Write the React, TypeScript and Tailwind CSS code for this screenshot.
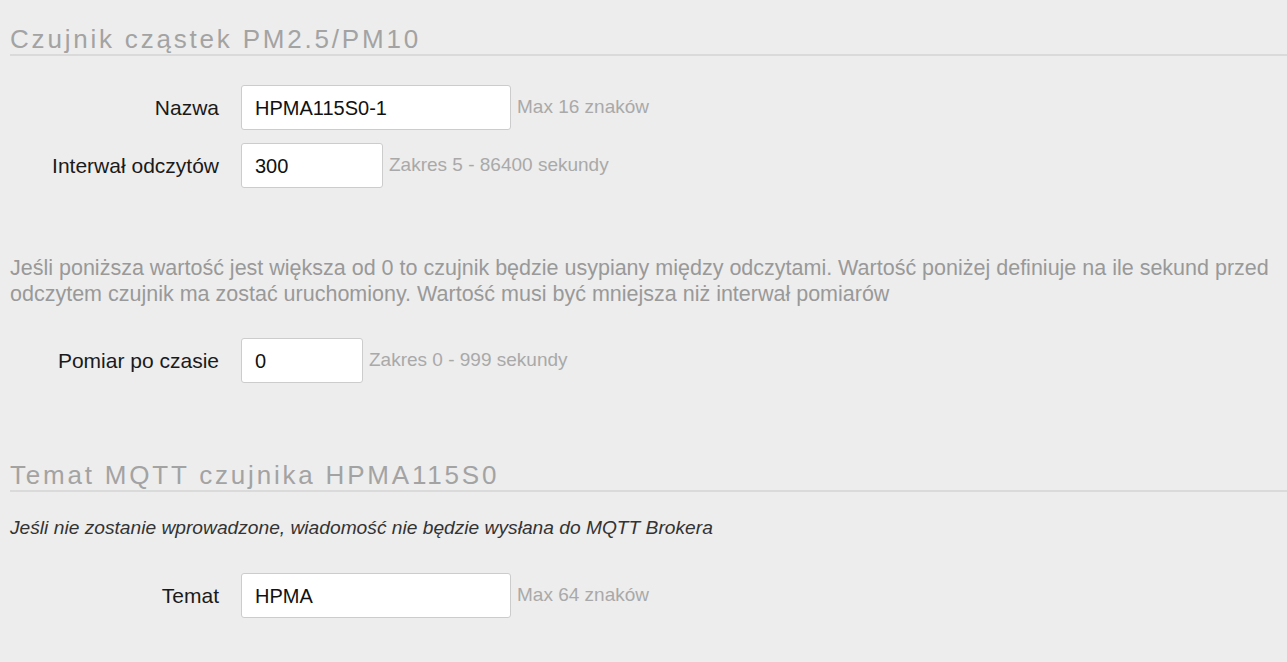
import React from "react";

function Row({ label, value, width, hint }: { label: string; value: string; width: string; hint: string }) {
  return (
    <div className="flex items-center">
      <div className="w-[209px] text-right text-[21px] text-[#1a1a1a] leading-[24px]">{label}</div>
      <div className={`ml-[22px] h-[45px] ${width} bg-white border border-[#cccccc] rounded-[3px] flex items-center pl-[13px] text-[20px] text-[#111]`}>
        {value}
      </div>
      <div className="ml-[6px] text-[19px] text-[#a9a9a9]">{hint}</div>
    </div>
  );
}

export default function App() {
  return (
    <div className="min-h-[662px] w-full bg-[#ededed] pl-[10px] pt-[24px] overflow-hidden font-['Liberation_Sans',Arial,sans-serif]">
      <h2 className="text-[26px] leading-[30px] tracking-[2.8px] text-[#a3a3a3] border-b-2 border-[#dadada]">
        Czujnik cząstek PM2.5/PM10
      </h2>
      <div className="mt-[29px] flex flex-col gap-[13px]">
        <Row label="Nazwa" value="HPMA115S0-1" width="w-[270px]" hint="Max 16 znaków" />
        <Row label="Interwał odczytów" value="300" width="w-[142px]" hint="Zakres 5 - 86400 sekundy" />
      </div>
      <p className="mt-[67px] text-[21.5px] leading-[26px] text-[#999999] pr-[10px]">
        Jeśli poniższa wartość jest większa od 0 to czujnik będzie usypiany między odczytami. Wartość poniżej definiuje na ile sekund przed odczytem czujnik ma zostać uruchomiony. Wartość musi być mniejsza niż interwał pomiarów
      </p>
      <div className="mt-[31px]">
        <Row label="Pomiar po czasie" value="0" width="w-[122px]" hint="Zakres 0 - 999 sekundy" />
      </div>
      <h2 className="mt-[77px] text-[26px] leading-[30px] tracking-[2.8px] text-[#a3a3a3] border-b-2 border-[#dadada]">
        Temat MQTT czujnika HPMA115S0
      </h2>
      <p className="mt-[24px] text-[19.2px] leading-[24px] italic text-[#333333]">
        Jeśli nie zostanie wprowadzone, wiadomość nie będzie wysłana do MQTT Brokera
      </p>
      <div className="mt-[33px]">
        <Row label="Temat" value="HPMA" width="w-[270px]" hint="Max 64 znaków" />
      </div>
    </div>
  );
}
